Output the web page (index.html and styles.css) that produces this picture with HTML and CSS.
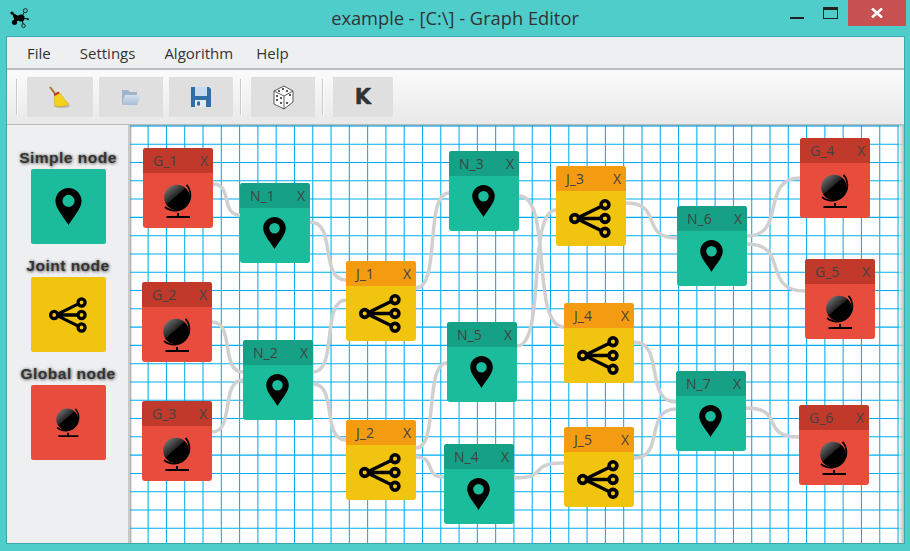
FILE: index.html
```html
<!DOCTYPE html>
<html lang="en">
<head>
    <meta charset="UTF-8">
    <meta name="viewport" content="width=device-width, initial-scale=1.0">
    <title>Graph Editor</title>
    <link rel="stylesheet" href="styles.css">
</head>
<body>
    <!-- shared icons -->
    <svg class="defs" width="0" height="0">
        <defs>
            <linearGradient id="sphere" x1="0.15" y1="0.1" x2="0.75" y2="0.8">
                <stop offset="0" stop-color="#6e6e6e"/>
                <stop offset="0.5" stop-color="#222"/>
                <stop offset="0.52" stop-color="#000"/>
            </linearGradient>
            <linearGradient id="folder" x1="0" y1="0" x2="0" y2="1">
                <stop offset="0" stop-color="#d3e0ee"/>
                <stop offset="1" stop-color="#a6bdd6"/>
            </linearGradient>
            <symbol id="pin" viewBox="0 0 24 34">
                <path fill="#000" fill-rule="evenodd" d="M12 0C5.4 0 0 5.3 0 11.9 0 19 8 27 12 34c4-7 12-15 12-22.1C24 5.3 18.6 0 12 0zM12 6.3a5.6 5.6 0 1 1 0 11.2 5.6 5.6 0 0 1 0-11.2z"/>
            </symbol>
            <symbol id="share" viewBox="0 0 42 39">
                <g fill="none" stroke="#000" stroke-width="3.6">
                    <circle cx="5.7" cy="19.5" r="3.9"/>
                    <circle cx="36" cy="5.7" r="3.9"/>
                    <circle cx="36" cy="19.5" r="3.9"/>
                    <circle cx="36" cy="33.3" r="3.9"/>
                    <path d="M9.5 18.5 32 7.5M9.7 19.5H32M9.5 20.5 32 31.5"/>
                </g>
            </symbol>
            <symbol id="globe" viewBox="0 0 29 34">
                <circle cx="13" cy="13.5" r="12.8" fill="url(#sphere)"/>
                <g fill="none" stroke="#000">
                    <path stroke-width="1.8" d="M22.5 0.800 A15.5 15.5 0 0 1 1 23"/>
                    <path stroke-width="2" d="M14 29V33M2.500 33H26"/>
                </g>
            </symbol>
        </defs>
    </svg>

    <header class="titlebar">
        <svg class="app-icon" width="20" height="22" viewBox="0 0 20 22">
            <path stroke="#000" d="M2 5 11 10 5 14M11 10 15 3M11 10 14 18M11 10 18 11"/>
            <circle cx="11" cy="10" r="3.6"/>
            <circle cx="4.500" cy="14.300" r="2.600"/>
            <circle cx="2" cy="5" r="1.600"/>
            <circle cx="18" cy="11.300" r="1"/>
            <circle cx="15.300" cy="2.700" r="2" fill="#4ecdcb" stroke="#222"/>
            <circle cx="13.500" cy="17.700" r="1.800" fill="#4ecdcb" stroke="#222"/>
        </svg>
        <div class="title">example - [C:\] - Graph Editor</div>
        <div class="controls">
            <span class="min"></span>
            <span class="max"></span>
            <span class="close">
                <svg width="12" height="10" viewBox="0 0 12 10"><path stroke="#fff" stroke-width="2.600" d="M1 0.500 11 9.500M11 0.500 1 9.500"/></svg>
            </span>
        </div>
    </header>

    <div class="client">
        <nav class="menubar">
            <span class="m-file">File</span>
            <span class="m-settings">Settings</span>
            <span class="m-algo">Algorithm</span>
            <span>Help</span>
        </nav>

        <div class="toolbar">
            <i class="sep"></i>
            <button class="tool tool-a">
                <svg width="22" height="23" viewBox="0 0 22 23">
                    <ellipse cx="13" cy="20" rx="8" ry="2" fill="#bbb"/>
                    <path stroke="#a9742c" stroke-width="2" d="M1 1 7 9"/>
                    <path fill="#f3d21f" stroke="#c9a414" stroke-width="0.500" d="M6 8 10 6C13 10 17 15 20 18 15 21 9 21 6 20 5 16 5 12 6 8z"/>
                    <path stroke="#c8332c" stroke-width="2" d="M5 9 10 6.500"/>
                </svg>
            </button>
            <button class="tool tool-b">
                <svg width="20" height="18" viewBox="0 0 20 18">
                    <path fill="#9fb4cc" d="M1 2H7L9 4H16V8H4L1 17z"/>
                    <path fill="url(#folder)" d="M4 7H20L16 17H1z"/>
                </svg>
            </button>
            <button class="tool tool-c">
                <svg width="20" height="20" viewBox="0 0 20 20">
                    <path fill="#2f6ea8" d="M0 0H18L20 2V20H0z"/>
                    <rect x="4" y="0" width="12" height="9" fill="#c6dbee"/>
                    <rect x="4" y="13" width="11" height="7" fill="#e6ebf0"/>
                    <rect x="6" y="14.500" width="3" height="4" fill="#2f6ea8"/>
                </svg>
            </button>
            <i class="sep sep-mid"></i>
            <button class="tool tool-c">
                <svg width="21" height="25" viewBox="0 0 21 25">
                    <path fill="#fff" stroke="#333" stroke-width="0.800" stroke-linejoin="round" d="M1 6 11 1 20 6 20 17 11 24 1 19z"/>
                    <path fill="none" stroke="#333" stroke-width="0.800" d="M1 6 11 11 20 6M11 11V24"/>
                    <g fill="#222">
                        <circle cx="10" cy="4" r="1"/><circle cx="6" cy="6" r="1"/><circle cx="14" cy="6" r="1"/>
                        <circle cx="4" cy="11" r="1"/><circle cx="8" cy="18" r="1"/><circle cx="4" cy="15" r="1"/><circle cx="8" cy="13" r="1"/>
                        <circle cx="17" cy="10" r="1"/><circle cx="14" cy="18" r="1"/>
                    </g>
                </svg>
            </button>
            <i class="sep sep-mid"></i>
            <button class="tool tool-k">K</button>
        </div>

        <div class="main">
            <aside class="palette">
                <div class="pal-label">Simple node</div>
                <div class="pal-box green"><svg class="ic-pin-lg"><use href="#pin"/></svg></div>
                <div class="pal-label">Joint node</div>
                <div class="pal-box yellow"><svg class="ic-share-lg"><use href="#share"/></svg></div>
                <div class="pal-label">Global node</div>
                <div class="pal-box red"><svg class="ic-globe-lg"><use href="#globe"/></svg></div>
            </aside>

            <section class="canvas">
                <svg class="board" viewBox="130 125 774 418">
                    <path class="grid" d="M148.14 125V543M166.43 125V543M184.72 125V543M203.01 125V543M221.3 125V543M239.59 125V543M257.88 125V543M276.17 125V543M294.46 125V543M312.75 125V543M331.04 125V543M349.33 125V543M367.62 125V543M385.91 125V543M404.2 125V543M422.49 125V543M440.78 125V543M459.07 125V543M477.36 125V543M495.65 125V543M513.94 125V543M532.23 125V543M550.52 125V543M568.81 125V543M587.1 125V543M605.39 125V543M623.68 125V543M641.97 125V543M660.26 125V543M678.55 125V543M696.84 125V543M715.13 125V543M733.42 125V543M751.71 125V543M770 125V543M788.29 125V543M806.58 125V543M824.87 125V543M843.16 125V543M861.45 125V543M879.74 125V543M898.03 125V543"/>
                    <path class="grid" d="M130 125.91H904M130 144.2H904M130 162.49H904M130 180.78H904M130 199.07H904M130 217.36H904M130 235.65H904M130 253.94H904M130 272.23H904M130 290.52H904M130 308.81H904M130 327.1H904M130 345.39H904M130 363.68H904M130 381.97H904M130 400.26H904M130 418.55H904M130 436.84H904M130 455.13H904M130 473.42H904M130 491.71H904M130 510H904M130 528.29H904"/>
                    <g class="edges">
                        <path d="M213 184C233 184 220 215 240 215"/>
                        <path d="M212 322C235 322 220 372 243 372"/>
                        <path d="M212 432C235 432 220 380 243 380"/>
                        <path d="M310 222C337 222 319 280 346 280"/>
                        <path d="M313 372C338 372 321 300 346 300"/>
                        <path d="M313 384C338 384 321 440 346 440"/>
                        <path d="M416 288C441 288 424 193 449 193"/>
                        <path d="M416 448C439 448 424 363 447 363"/>
                        <path d="M416 457C437 457 423 477 444 477"/>
                        <path d="M519 196C553 196 530 327 564 327"/>
                        <path d="M517 346C546 346 527 210 556 210"/>
                        <path d="M514 478C551 478 526 463 564 463"/>
                        <path d="M626 203C664 203 639 238 677 238"/>
                        <path d="M634 342C665 342 644 402 676 402"/>
                        <path d="M634 458C665 458 644 409 676 409"/>
                        <path d="M747 236C787 236 760 178 800 178"/>
                        <path d="M747 244C790 244 761 291 805 291"/>
                        <path d="M746 408C786 408 759 437 799 437"/>
                    </g>
                </svg>

                <div class="node red at-g1"><div class="node-head"><span>G_1</span><span>X</span></div><div class="node-body"><svg class="ic-globe"><use href="#globe"/></svg></div></div>
                <div class="node red at-g2"><div class="node-head"><span>G_2</span><span>X</span></div><div class="node-body"><svg class="ic-globe"><use href="#globe"/></svg></div></div>
                <div class="node red at-g3"><div class="node-head"><span>G_3</span><span>X</span></div><div class="node-body"><svg class="ic-globe"><use href="#globe"/></svg></div></div>
                <div class="node red at-g4"><div class="node-head"><span>G_4</span><span>X</span></div><div class="node-body"><svg class="ic-globe"><use href="#globe"/></svg></div></div>
                <div class="node red at-g5"><div class="node-head"><span>G_5</span><span>X</span></div><div class="node-body"><svg class="ic-globe"><use href="#globe"/></svg></div></div>
                <div class="node red at-g6"><div class="node-head"><span>G_6</span><span>X</span></div><div class="node-body"><svg class="ic-globe"><use href="#globe"/></svg></div></div>

                <div class="node green at-n1"><div class="node-head"><span>N_1</span><span>X</span></div><div class="node-body"><svg class="ic-pin"><use href="#pin"/></svg></div></div>
                <div class="node green at-n2"><div class="node-head"><span>N_2</span><span>X</span></div><div class="node-body"><svg class="ic-pin"><use href="#pin"/></svg></div></div>
                <div class="node green at-n3"><div class="node-head"><span>N_3</span><span>X</span></div><div class="node-body"><svg class="ic-pin"><use href="#pin"/></svg></div></div>
                <div class="node green at-n4"><div class="node-head"><span>N_4</span><span>X</span></div><div class="node-body"><svg class="ic-pin"><use href="#pin"/></svg></div></div>
                <div class="node green at-n5"><div class="node-head"><span>N_5</span><span>X</span></div><div class="node-body"><svg class="ic-pin"><use href="#pin"/></svg></div></div>
                <div class="node green at-n6"><div class="node-head"><span>N_6</span><span>X</span></div><div class="node-body"><svg class="ic-pin"><use href="#pin"/></svg></div></div>
                <div class="node green at-n7"><div class="node-head"><span>N_7</span><span>X</span></div><div class="node-body"><svg class="ic-pin"><use href="#pin"/></svg></div></div>

                <div class="node yellow at-j1"><div class="node-head"><span>J_1</span><span>X</span></div><div class="node-body"><svg class="ic-share"><use href="#share"/></svg></div></div>
                <div class="node yellow at-j2"><div class="node-head"><span>J_2</span><span>X</span></div><div class="node-body"><svg class="ic-share"><use href="#share"/></svg></div></div>
                <div class="node yellow at-j3"><div class="node-head"><span>J_3</span><span>X</span></div><div class="node-body"><svg class="ic-share"><use href="#share"/></svg></div></div>
                <div class="node yellow at-j4"><div class="node-head"><span>J_4</span><span>X</span></div><div class="node-body"><svg class="ic-share"><use href="#share"/></svg></div></div>
                <div class="node yellow at-j5"><div class="node-head"><span>J_5</span><span>X</span></div><div class="node-body"><svg class="ic-share"><use href="#share"/></svg></div></div>
            </section>
        </div>
    </div>
</body>
</html>
```

FILE: styles.css
```css
* {
    box-sizing: border-box;
}
html, body {
    height: 100%;
}
body {
    margin: 0;
    background-color: #4ecdcb;
    font-family: "Open Sans", sans-serif;
    color: #333;
    display: flex;
    flex-direction: column;
    overflow: hidden;
}
.defs {
    position: absolute;
}

/* title bar */
.titlebar {
    height: 36px;
    flex: none;
    display: grid;
    grid-template-columns: 1fr auto 1fr;
}
.app-icon {
    margin: 8px 0 0 10px;
}
.title {
    font-size: 18.3px;
    line-height: 36px;
    color: #333;
}
.controls {
    display: flex;
    justify-content: flex-end;
    align-items: flex-start;
    padding-right: 4px;
}
.min {
    width: 14px;
    height: 2px;
    background-color: #222;
    margin: 17px 19px 0 0;
}
.max {
    width: 15px;
    height: 12px;
    border: 1px solid #222;
    border-top-width: 3px;
    margin: 7px 10px 0 0;
}
.close {
    width: 58px;
    height: 26px;
    background-color: #c75050;
    display: flex;
    align-items: center;
    justify-content: center;
}

/* window body */
.client {
    flex: 1;
    margin: 0 5px 7px 6px;
    border: 1px solid #3ca9a8;
    background-color: #eeeff1;
    display: flex;
    flex-direction: column;
    min-height: 0;
}
.menubar {
    height: 33px;
    flex: none;
    display: flex;
    align-items: center;
    padding: 0 0 0 20px;
    font-size: 15px;
    border-bottom: 2px solid #bdbdbd;
}
.m-file { margin-right: 29px; }
.m-settings { margin-right: 29px; }
.m-algo { margin-right: 23px; }

.toolbar {
    height: 55px;
    flex: none;
    display: flex;
    align-items: center;
    padding: 0 0 0 9px;
    background: linear-gradient(#fbfbfb, #e9e9e9);
    border-bottom: 1px solid #bbb;
}
.sep {
    width: 1px;
    height: 36px;
    background-color: #c9c9c9;
    box-shadow: 1px 0 0 #fff;
    margin-right: 10px;
}
.sep-mid {
    margin-left: 1px;
}
.tool {
    height: 40px;
    border: none;
    padding: 0;
    background-color: #dfdfdf;
    margin-right: 6px;
    display: flex;
    align-items: center;
    justify-content: center;
}
.tool-a { width: 66px; }
.tool-b, .tool-c { width: 64px; }
.tool-k {
    width: 60px;
    font-family: "DejaVu Sans", sans-serif;
    font-weight: bold;
    font-size: 21px;
    color: #333;
    -webkit-text-stroke: 0.5px #333;
}

.main {
    flex: 1;
    display: flex;
    min-height: 0;
}

/* node palette */
.palette {
    width: 123px;
    flex: none;
    display: flex;
    flex-direction: column;
    align-items: center;
    padding: 24px 0 0 1px;
    border-right: 2px solid #c9c9c9;
}
.pal-label {
    height: 18px;
    line-height: 18px;
    margin-bottom: 2px;
    font-family: "Liberation Sans", sans-serif;
    font-size: 15.5px;
    font-weight: bold;
    letter-spacing: 0.5px;
    white-space: nowrap;
    color: #333;
    text-shadow: 0 0 3px #777, 1px 1px 3px #888;
}
.pal-box {
    width: 75px;
    height: 75px;
    margin-bottom: 13px;
    border-radius: 2px;
    display: flex;
    align-items: center;
    justify-content: center;
}
.ic-pin-lg { width: 27px; height: 37px; }
.ic-share-lg { width: 38px; height: 36px; }
.ic-globe-lg { width: 25px; height: 29px; }

.green { background-color: #1abc9c; }
.yellow { background-color: #f1c40f; }
.red { background-color: #e74c3c; }

/* graph canvas */
.canvas {
    flex: 1;
    position: relative;
    overflow: hidden;
    background-color: #fff;
    box-shadow: inset 1px 1px 2px #999;
}
.board {
    position: absolute;
    left: 0;
    top: 0;
    width: 774px;
    height: 418px;
}
.grid {
    fill: none;
    stroke: #00aeef;
    stroke-width: 1.05;
}
.edges path {
    fill: none;
    stroke: #d0d0d0;
    stroke-width: 3.5;
}
.canvas::after {
    content: "";
    position: absolute;
    right: 0;
    top: 0;
    bottom: 0;
    width: 5px;
    background: linear-gradient(to right, rgba(255, 255, 255, 0.5), #bbb);
}

.node {
    position: absolute;
    width: 70px;
    height: 80px;
    border-radius: 3px;
    overflow: hidden;
    z-index: 1;
}
.node-head {
    height: 25px;
    display: flex;
    justify-content: space-between;
    align-items: center;
    padding: 0 5px 0 10px;
    font-size: 14px;
    color: #424242;
}
.red .node-head { background-color: #c0392b; }
.green .node-head { background-color: #16a085; }
.yellow .node-head { background-color: #f39c12; }
.node-body {
    height: 55px;
    display: flex;
    align-items: center;
    justify-content: center;
}
.green .node-body {
    padding: 0 2px 6px 0;
}
.yellow .node-body {
    padding-right: 2px;
}
.ic-pin { width: 23px; height: 32px; }
.ic-share { width: 42px; height: 39px; }
.ic-globe { width: 29px; height: 34px; }

/* node places on the board */
.at-g1 { left: 13px; top: 23px; }
.at-g2 { left: 12px; top: 157px; }
.at-g3 { left: 12px; top: 276px; }
.at-g4 { left: 670px; top: 13px; }
.at-g5 { left: 675px; top: 134px; }
.at-g6 { left: 669px; top: 280px; }
.at-n1 { left: 110px; top: 58px; }
.at-n2 { left: 113px; top: 215px; }
.at-n3 { left: 319px; top: 26px; }
.at-n4 { left: 314px; top: 319px; }
.at-n5 { left: 317px; top: 197px; }
.at-n6 { left: 547px; top: 81px; }
.at-n7 { left: 546px; top: 246px; }
.at-j1 { left: 216px; top: 136px; }
.at-j2 { left: 216px; top: 295px; }
.at-j3 { left: 426px; top: 41px; }
.at-j4 { left: 434px; top: 178px; }
.at-j5 { left: 434px; top: 302px; }
```
